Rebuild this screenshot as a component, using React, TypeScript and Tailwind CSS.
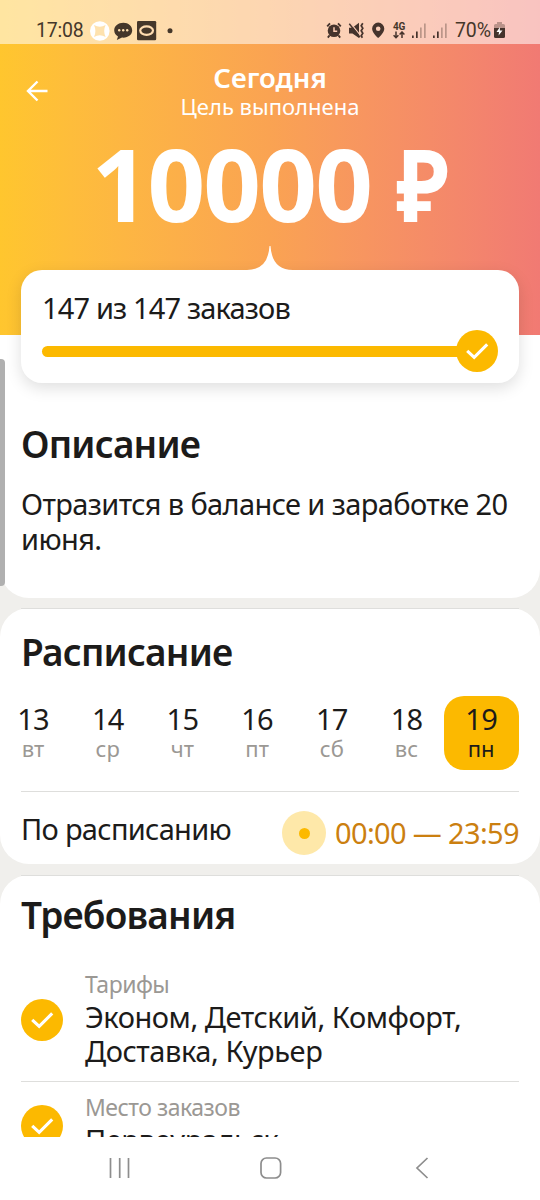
import type { ReactNode } from 'react';

const DAYS = [
  { date: 13, name: 'вт' },
  { date: 14, name: 'ср' },
  { date: 15, name: 'чт' },
  { date: 16, name: 'пт' },
  { date: 17, name: 'сб' },
  { date: 18, name: 'вс' },
  { date: 19, name: 'пн' },
];

const ACTIVE_DAY = 19;

function CheckBadge() {
  return (
    <svg width="42" height="42" viewBox="0 0 42 42" className="block shrink-0">
      <circle cx="21" cy="21" r="21" fill="#fcb900" />
      <path d="M11.2 20.8 18.2 27.4 31.2 14.4" fill="none" stroke="#fff" strokeWidth="3.1" />
    </svg>
  );
}

function SignalIcon() {
  return (
    <svg width="14" height="16" viewBox="0 0 14 16" className="block" fill="#45332c">
      <rect x="0" y="12.5" width="1.7" height="2.5" />
      <rect x="4" y="8.5" width="1.7" height="6.5" />
      <rect x="8" y="4.5" width="1.7" height="10.5" opacity="0.35" />
      <rect x="12" y="0.5" width="1.7" height="14.5" opacity="0.35" />
    </svg>
  );
}

function StatusBar() {
  return (
    <div className="flex h-11 items-start bg-white/55 pl-[36px] pr-[35px] pt-[19px] font-['Roboto',sans-serif] text-[#45372a]">
      <span className="w-[54px] text-[19.5px] leading-[23px] tracking-[-0.2px]">17:08</span>
      <svg width="84" height="22" viewBox="0 0 84 22" className="mt-px block">
        <circle cx="9.8" cy="11" r="9.8" fill="#fff" />
        <path d="M4 5Q9.8 8.5 15.6 5Q12.8 11 15.6 17Q9.8 13.5 4 17Q6.8 11 4 5Z" fill="#fee2ae" />
        <path d="M33.4 2.8c-5.2 0-9.2 3.2-9.2 7.5 0 2.7 1.5 4.9 3.8 6.2L26.8 20l5.2-2.4c6 .5 10.2-2.9 10.2-7.3 0-4.3-3.8-7.5-8.8-7.5Z" fill="#45372a" />
        <g fill="#ffe0ae">
          <circle cx="29.2" cy="10.2" r="1.2" />
          <circle cx="33.2" cy="10.2" r="1.2" />
          <circle cx="37.2" cy="10.2" r="1.2" />
        </g>
        <rect x="47" y="1" width="19.2" height="19.2" rx="1.3" fill="#45372a" />
        <ellipse cx="56.6" cy="10.6" rx="6.4" ry="4.2" fill="none" stroke="#ffdcb0" strokeWidth="2.2" />
        <circle cx="80" cy="10.8" r="2.5" fill="#45372a" />
      </svg>
      <div className="ml-auto flex items-start">
        <svg width="60" height="18" viewBox="0 0 60 18" className="mr-[7px] mt-[3px] block" fill="#45332c">
          {/* alarm clock */}
          <circle cx="8" cy="8.8" r="6.3" />
          <path d="M1.2 4.4 4 1.4M14.8 4.4 12 1.4M3.6 13.4 1.8 15.6M12.4 13.4 14.2 15.6" stroke="#45332c" strokeWidth="1.8" />
          <path d="M8 5.2V9.3H11.2" fill="none" stroke="#fbcbb2" strokeWidth="1.5" />
          {/* muted speaker */}
          <path d="M23 5.8h3.4L33 .8V16l-6.6-4.6H23Z" />
          <path d="M24.3.8 35 14.2" stroke="#fbcbb5" strokeWidth="1.2" />
          <path d="M23.3 1.8 34 15.2" stroke="#45332c" strokeWidth="1.4" />
          <path d="M36.8 1.2l-1.6 2.5 1.6 2.5-1.6 2.5 1.6 2.5-1.6 2.5 1.2 2" fill="none" stroke="#45332c" strokeWidth="1.7" />
          {/* location */}
          <path fillRule="evenodd" d="M52.2.6a6.1 6.1 0 0 0-6.1 6.1c0 4.2 6.1 9.3 6.1 9.3s6.1-5.1 6.1-9.3a6.1 6.1 0 0 0-6.1-6.1Zm0 3.8a2.3 2.3 0 1 1 0 4.6 2.3 2.3 0 0 1 0-4.6Z" />
        </svg>
        <div className="mr-[7px] mt-[3px] w-[12px]">
          <div className="text-[10px] font-bold leading-[9px] tracking-[-0.3px]">4G</div>
          <svg width="12" height="8" viewBox="0 0 12 8" className="block" fill="none" stroke="#45332c" strokeWidth="1.5">
            <path d="M3 .5V6.5M.6 4.2 3 6.7 5.4 4.2M9 7V1.2M6.6 3.5 9 1 11.4 3.5" />
          </svg>
        </div>
        <div className="mr-[8px] mt-[4px] flex gap-[7px]">
          <SignalIcon />
          <SignalIcon />
        </div>
        <span className="w-[39px] text-[19.5px] leading-[23px] tracking-[-0.1px]">70%</span>
        <svg width="11" height="17" viewBox="0 0 11 17" className="mt-[3px] block">
          <path d="M3 0h5v2h1.5Q11 2 11 3.5V7H0V3.5Q0 2 1.5 2H3Z" fill="#45332c" opacity="0.35" />
          <path d="M0 6h11v8.5Q11 16 9.5 16h-8Q0 16 0 14.5Z" fill="#45332c" />
          <path d="M6 5 2.5 10H5L4.6 13.5 8.5 8.5H5.8Z" fill="#fff" />
        </svg>
      </div>
    </div>
  );
}

interface SectionProps {
  title: string;
  className?: string;
  children: ReactNode;
}

function Section({ title, className = '', children }: SectionProps) {
  return (
    <section className="rounded-t-[29px] px-[21px] rounded-b-[29px] bg-white">
      <div className="h-px bg-[#dededc]" />
      <div className={className}>
        <h2 className="text-[37px] font-semibold leading-[48px] tracking-[-0.8px]">{title}</h2>
        {children}
      </div>
    </section>
  );
}

function Requirement({ label, value }: { label: string; value: string }) {
  return (
    <div className="flex items-center gap-[22px]">
      <div className="pt-[3px]">
        <CheckBadge />
      </div>
      <div>
        <div className="text-[23px] leading-[31px] tracking-[-0.5px] text-[#9b9894]">{label}</div>
        <div className="text-[29px] leading-[34px] tracking-[-0.45px]">{value}</div>
      </div>
    </div>
  );
}

function NavBar() {
  return (
    <nav className="flex h-[63px] items-center justify-between bg-white pb-px pl-[109px] pr-[111px]">
      <svg width="21" height="22" viewBox="0 0 21 22" fill="none" stroke="#8d8d8d" strokeWidth="1.7">
        <path d="M1.5 1V21M10.7 1V21M19.5 1V21" />
      </svg>
      <svg width="22" height="22" viewBox="0 0 22 22" className="-ml-[4px]" fill="none" stroke="#8d8d8d" strokeWidth="1.7">
        <rect x="1" y="1" width="19.6" height="20" rx="5.5" />
      </svg>
      <svg width="14" height="22" viewBox="0 0 14 22" fill="none" stroke="#8d8d8d" strokeWidth="1.7">
        <path d="M12.5 1 2 11 12.5 21" />
      </svg>
    </nav>
  );
}

export default function App() {
  return (
    <div className="relative flex h-[1200px] w-[540px] flex-col overflow-hidden bg-[#f0efec] font-['Noto_Sans',sans-serif] text-[#1c1b1a]">
      <div className="min-h-0 flex-1 overflow-hidden">
        <div className="h-[598px] rounded-b-[29px] bg-white">
          <header className="h-[335px] bg-linear-to-r from-[#ffc62e] via-[#faa352] to-[#f17a73] text-white">
            <StatusBar />
            <div className="grid grid-cols-[60px_1fr_60px] pt-[17px]">
              <svg width="22" height="22" viewBox="0 0 22 22" className="ml-[26px] mt-[19px]" fill="none" stroke="#fff" strokeWidth="2.4">
                <path d="M21.5 11H2M11.5 1.5 2 11 11.5 20.5" />
              </svg>
              <div className="text-center">
                <h1 className="text-[27.5px] font-semibold leading-[33px]">Сегодня</h1>
                <p className="text-[22px] leading-[25px]">Цель выполнена</p>
              </div>
            </div>
            <div className="mt-[14px] flex justify-center whitespace-pre pr-[2px] text-[101px] font-bold leading-[100px] tracking-[-1.8px]">
              <span>10000 </span>
              <span className="-mr-[8px] origin-left scale-x-[0.87]">₽</span>
            </div>
          </header>

          <div className="relative mx-[21px] -mt-[65px] h-[112.5px] rounded-[21px] bg-white px-[21px] pt-[19px] shadow-[0_5px_16px_rgba(0,0,0,0.13)]">
            <svg width="46" height="25" viewBox="0 0 46 25" className="absolute -top-[24px] left-1/2 -translate-x-1/2" fill="#fff">
              <path d="M0 25V24Q21 24 22.5 0H23.5Q25 24 46 24V25Z" />
            </svg>
            <div className="text-[29px] leading-[38px] tracking-[-0.85px]">147 из 147 заказов</div>
            <div className="mt-[3px] flex items-center">
              <div className="-mr-2 h-[11px] flex-1 rounded-l-full bg-[#fcb900]" />
              <CheckBadge />
            </div>
          </div>

          <div className="px-[21px] pt-[37.5px]">
            <h2 className="text-[37px] font-semibold leading-[48px] tracking-[-0.8px]">Описание</h2>
            <p className="mt-[18px] text-[29px] leading-[35px] tracking-[-0.62px]">
              Отразится в балансе и заработке 20
              <br />
              июня.
            </p>
          </div>
        </div>

        <div className="mt-[10px] h-[256px]">
          <Section title="Расписание" className="pt-[19px]">
            <div className="-ml-[26px] mt-[20px] flex justify-end">
              {DAYS.map((day) => (
                <div
                  key={day.date}
                  className={`flex h-[74px] w-[74.7px] flex-col items-center rounded-[20px] pr-px pt-[5px] ${
                    day.date === ACTIVE_DAY ? 'bg-[#fcb900]' : ''
                  }`}
                >
                  <span className="text-[29px] leading-[36px] tracking-[-0.8px]">{day.date}</span>
                  <span className={`text-[22px] leading-[23px] ${day.date === ACTIVE_DAY ? '' : 'text-[#9b9894]'}`}>
                    {day.name}
                  </span>
                </div>
              ))}
            </div>
            <div className="mt-[21px] h-px bg-[#dededc]" />
            <div className="flex h-[72px] items-start justify-between">
              <span className="pt-[18px] text-[29px] leading-[38px] tracking-[-0.7px]">По расписанию</span>
              <div className="flex items-center gap-[9px] pt-[19px]">
                <div className="flex size-[44px] items-center justify-center rounded-full bg-[#fee8a9]">
                  <div className="size-[11px] rounded-full bg-[#fcb900]" />
                </div>
                <span className="text-[29px] leading-[38px] tracking-[-0.65px] text-[#cb7f10]">00:00 — 23:59</span>
              </div>
            </div>
          </Section>
        </div>

        <div className="mt-[11px]">
          <Section title="Требования" className="pb-12 pt-[15px]">
            <div className="mt-[30px] pb-[13px]">
              <Requirement label="Тарифы" value="Эконом, Детский, Комфорт, Доставка, Курьер" />
            </div>
            <div className="h-px bg-[#dededc]" />
            <div className="pt-[10px]">
              <Requirement label="Место заказов" value="Первоуральск" />
            </div>
          </Section>
        </div>
      </div>
      <NavBar />
      {/* scroll position indicator */}
      <div className="absolute left-0 top-[359px] h-[227px] w-[5px] rounded-r-[4px] bg-[#b0b0b0]" />
    </div>
  );
}
